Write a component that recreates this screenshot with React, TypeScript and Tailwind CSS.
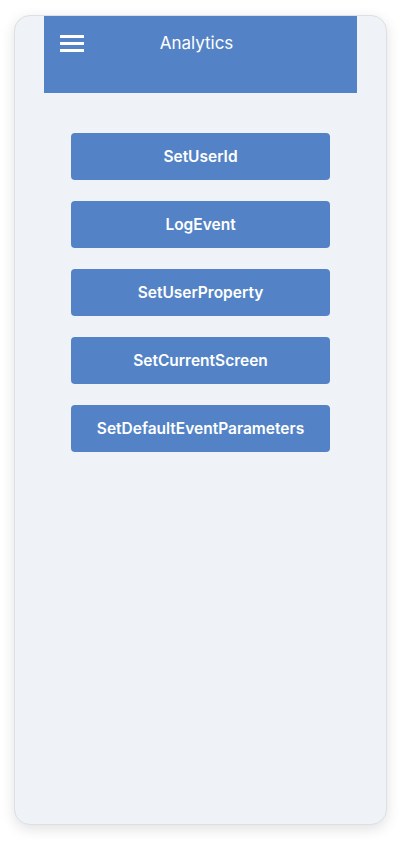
const actions = [
  'SetUserId',
  'LogEvent',
  'SetUserProperty',
  'SetCurrentScreen',
  'SetDefaultEventParameters',
];

function App() {
  return (
    <div className="min-h-screen bg-white pt-[15px] pl-[14px] font-['Inter','Liberation_Sans',sans-serif]">
      <div className="w-[373px] h-[810px] rounded-[16px] bg-[#eff3f7] border border-[#dcdfe3] shadow-[0_4px_14px_rgba(0,0,0,0.12)] overflow-hidden">
        {/* header */}
        <div className="ml-[29px] -mt-px w-[313px] h-[78px] bg-[#5383c6] flex items-start pt-[20px] pl-[16px]">
          <div className="flex flex-col gap-[4px] w-[24px]">
            <span className="block h-[3px] bg-white" />
            <span className="block h-[3px] bg-white" />
            <span className="block h-[3px] bg-white" />
          </div>
          <div className="flex-1 text-center text-white text-[17px] font-normal -mt-[4px] pr-[48px]">Analytics</div>
        </div>

        {/* buttons */}
        <div className="flex flex-col gap-[21px] pt-[40px] pl-[56px]">
          {actions.map((a) => (
            <button
              key={a}
              className="w-[259px] h-[47px] rounded-[4px] bg-[#5383c6] text-white text-[15.5px] font-semibold"
            >
              {a}
            </button>
          ))}
        </div>
      </div>
    </div>
  );
}

export default App;
